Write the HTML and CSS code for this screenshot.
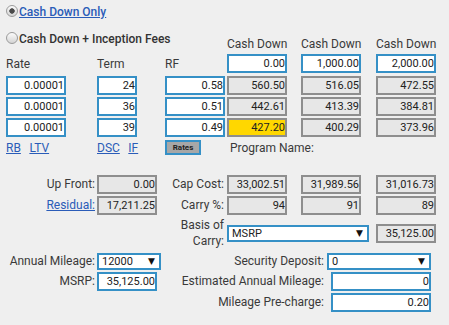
FILE: index.html
```html
<!DOCTYPE html>
<html>
<head>
<meta charset="utf-8">
<link rel="stylesheet" href="styles.css">
</head>
<body>
<div class="page">
  <label class="radio-line r1"><input type="radio" name="cd" class="radio" checked><a href="#" class="link strong">Cash Down Only</a></label>

  <div class="grid6 top">
    <label class="radio-line r2 span3"><input type="radio" name="cd" class="radio"><span class="strong">Cash Down + Inception Fees</span></label>
    <div class="hdr">Cash Down</div>
    <div class="hdr">Cash Down</div>
    <div class="hdr">Cash Down</div>

    <div class="lbl">Rate</div>
    <div class="lbl">Term</div>
    <div class="lbl">RF</div>
    <input class="fld" value="0.00">
    <input class="fld" value="1,000.00">
    <input class="fld" value="2,000.00">

    <input class="fld" value="0.00001">
    <input class="fld w40" value="24">
    <input class="fld" value="0.58">
    <input class="fld ro" value="560.50" readonly>
    <input class="fld ro" value="516.05" readonly>
    <input class="fld ro" value="472.55" readonly>

    <input class="fld" value="0.00001">
    <input class="fld w40" value="36">
    <input class="fld" value="0.51">
    <input class="fld ro" value="442.61" readonly>
    <input class="fld ro" value="413.39" readonly>
    <input class="fld ro" value="384.81" readonly>

    <input class="fld" value="0.00001">
    <input class="fld w40" value="39">
    <input class="fld" value="0.49">
    <input class="fld ro hl" value="427.20" readonly>
    <input class="fld ro" value="400.29" readonly>
    <input class="fld ro" value="373.96" readonly>

    <div class="links"><a href="#" class="link">RB</a><a href="#" class="link">LTV</a></div>
    <div class="links"><a href="#" class="link">DSC</a><a href="#" class="link">IF</a></div>
    <button class="btn">Rates</button>
    <div class="prog span3">Program Name:</div>
  </div>

  <div class="grid6 mid">
    <div class="rl1">Up Front:</div>
    <input class="fld ro" value="0.00" readonly>
    <div class="rl3">Cap Cost:</div>
    <input class="fld ro" value="33,002.51" readonly>
    <input class="fld ro" value="31,989.56" readonly>
    <input class="fld ro" value="31,016.73" readonly>

    <div class="rl1"><a href="#" class="link">Residual:</a></div>
    <input class="fld ro" value="17,211.25" readonly>
    <div class="rl3">Carry %:</div>
    <input class="fld ro" value="94" readonly>
    <input class="fld ro" value="91" readonly>
    <input class="fld ro" value="89" readonly>

    <div class="rl3 basis">Basis of Carry:</div>
    <span class="sel span2 w142"><select><option>MSRP</option></select></span>
    <input class="fld ro" value="35,125.00" readonly>
  </div>

  <div class="bot">
    <div class="rl1">Annual Mileage:</div>
    <span class="sel w64"><select><option>12000</option></select></span>
    <div class="rr">Security Deposit:</div>
    <span class="sel w104"><select><option>0</option></select></span>

    <div class="rl1">MSRP:</div>
    <input class="fld" value="35,125.00">
    <div class="rr">Estimated Annual Mileage:</div>
    <input class="fld w100" value="0">

    <div class="rr c3">Mileage Pre-charge:</div>
    <input class="fld w100" value="0.20">
  </div>
</div>
</body>
</html>
```

FILE: styles.css
```css
* { box-sizing: border-box; }
html, body { margin: 0; background: #efefef; }
body {
  font-family: Roboto, "Liberation Sans", sans-serif;
  font-size: 12px;
  color: #3a3a3a;
}
.page { padding-left: 6px; width: 449px; height: 325px; }

.link { color: #2a5cb8; text-decoration: underline; }
.strong { font-weight: 500; color: #333; }
.link.strong { color: #2a5cb8; }

.radio-line { display: flex; align-items: center; height: 16px; line-height: 16px; white-space: nowrap; }
.r1 { margin-top: 4px; margin-bottom: 7px; }
.r2 { align-self: start; margin-top: 4px; }
.radio {
  appearance: none;
  -webkit-appearance: none;
  width: 12px; height: 12px;
  margin: 0 1px 3px 0;
  border-radius: 50%;
  border: 1px solid #9b9b9b;
  background: linear-gradient(#fbfbfb, #d4d4d4);
}
.radio:checked {
  background: radial-gradient(circle, #4a4a4a 0 2.4px, transparent 3px), linear-gradient(#fbfbfb, #d4d4d4);
}

.grid6 { display: grid; grid-template-columns: 91px 68px 62px 74px 75px 60px; }
.span3 { grid-column: span 3; }
.span2 { grid-column: span 2; }

.top { grid-template-rows: 25px repeat(4, 19px) 16px; row-gap: 2.33px; }
.hdr { align-self: end; line-height: 14px; padding-bottom: 1px; white-space: nowrap; }
.lbl { align-self: center; line-height: 14px; }

.fld {
  display: block;
  width: 60px; height: 19px;
  margin: 0;
  border: 2px solid #3590c6;
  border-radius: 0;
  background: #fff;
  font: 11px Roboto, "Liberation Sans", sans-serif;
  color: #222;
  text-align: right;
  padding: 0;
  outline: none;
}
.w40 { width: 40px; }
.w100 { width: 100px; justify-self: end; }
.ro { border-color: #8e8e8e; background: #e7e7e7; }
.hl { background: #ffd700; }

.links { display: flex; gap: 8.5px; align-items: center; line-height: 14px; }
.btn {
  width: 36px; height: 15px;
  border: 2px solid #3590c6;
  border-radius: 0;
  background: #a7a7a7;
  font: bold 8px Roboto, "Liberation Sans", sans-serif;
  color: #222;
  padding: 0;
  align-self: start;
}
.prog { align-self: center; padding-left: 3px; line-height: 14px; white-space: nowrap; }

.mid { margin-top: 19px; grid-template-rows: 19px 19px auto; row-gap: 2px; align-items: center; }
.rl1 { text-align: right; padding-right: 2px; line-height: 14px; white-space: nowrap; }
.rl3 { text-align: right; padding-right: 3px; line-height: 14px; }
.basis { grid-column: 3; line-height: 16.6px; }

.sel { position: relative; display: block; height: 17px; }
.sel select {
  appearance: none;
  -webkit-appearance: none;
  display: block;
  width: 100%; height: 100%;
  margin: 0;
  border: 2px solid #3590c6;
  border-radius: 0;
  background: #fff;
  font: 11px Roboto, "Liberation Sans", sans-serif;
  color: #222;
  padding: 0 0 0 3px;
  outline: none;
}
.sel::after {
  content: "\25BC";
  position: absolute;
  right: 6px; top: 50%;
  transform: translateY(-50%);
  font: 9px "DejaVu Sans", sans-serif;
  color: #111;
  pointer-events: none;
}
.w142 { width: 142px; }
.w64 { width: 64px; }
.w104 { width: 104px; }

.bot {
  display: grid;
  width: 425px;
  margin-top: 3px;
  grid-template-columns: 91px 70px 1fr 104px;
  grid-template-rows: 17px 19px 19px;
  row-gap: 2px;
  align-items: center;
}
.rr { text-align: right; padding-right: 3px; line-height: 14px; white-space: nowrap; }
.c3 { grid-column: 3; }
```
